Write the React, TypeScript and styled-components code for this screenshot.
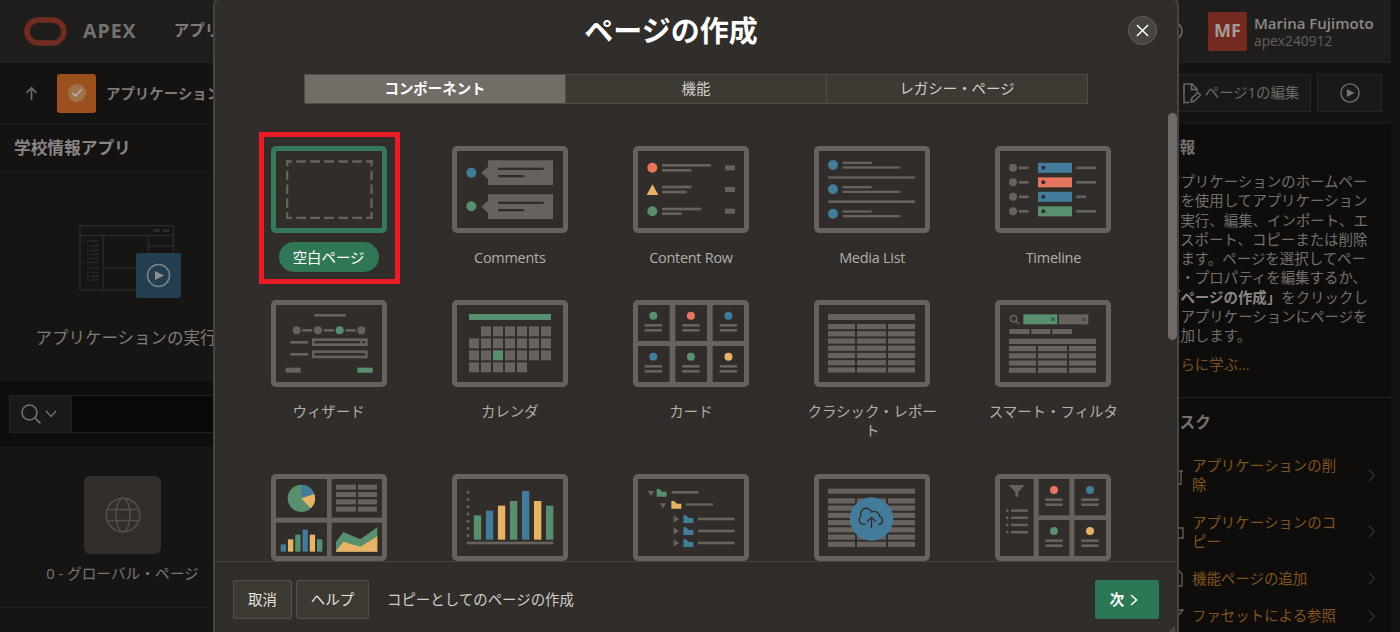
import React from "react";
import styled, { createGlobalStyle } from "styled-components";

const GREY = "#67625e";
const GREEN = "#578f6f";
const BLUE = "#437c9a";
const YELLOW = "#e9b366";
const RED = "#e5755f";
const PANEL = "#312d2a";

const Global = createGlobalStyle`
  * { box-sizing: border-box; }
  html, body { margin: 0; padding: 0; background: #151312; overflow: hidden; }
  body { font-family: "Open Sans", "Noto Sans CJK JP", sans-serif; font-size: 14.45px; line-height: 19.3px; }
  svg { display: block; flex: none; }
  button { font: inherit; cursor: pointer; }
`;

/* ---------- page behind the dialog ---------- */

const Viewport = styled.div`
  position: relative;
  width: 1400px;
  height: 632px;
  overflow: hidden;
  background: #151312;
`;

const Shell = styled.div`
  width: 1391px;
  height: 632px;
  display: flex;
  flex-direction: column;
`;

const TopBar = styled.header`
  height: 63px;
  flex: none;
  display: flex;
  align-items: center;
  background: #201e1c;
  border-bottom: 1px solid #252220;
  padding: 0 17px 0 24px;
`;

const Brand = styled.span`
  margin-left: 16px;
  font-size: 19.5px;
  font-weight: 700;
  letter-spacing: 1px;
  color: #74716f;
`;

const NavItem = styled.span`
  margin-left: 37px;
  font-size: 15.5px;
  font-weight: 700;
  color: #7f7c7a;
  white-space: nowrap;
`;

const Account = styled.div`
  margin-left: auto;
  display: flex;
  align-items: center;
`;

const Avatar = styled.div`
  width: 39px;
  height: 39px;
  margin: 0 7px 0 25px;
  border-radius: 2px;
  background: #742a20;
  color: #a39b98;
  font-size: 18px;
  font-weight: 700;
  display: flex;
  align-items: center;
  justify-content: center;
`;

const AccountText = styled.div`
  width: 120px;
  padding-top: 1px;
  line-height: 18px;
  white-space: nowrap;
`;

const UserName = styled.div`
  font-size: 15px;
  font-weight: 600;
  color: #8c8987;
`;

const Workspace = styled.div`
  font-size: 13.8px;
  color: #625f5d;
`;

const ToolBar = styled.div`
  height: 61px;
  flex: none;
  display: flex;
  align-items: center;
  padding: 0 9px 0 24px;
  background: #151312;
  border-bottom: 1px solid #1e1c1a;
`;

const AppIcon = styled.div`
  width: 39px;
  height: 39px;
  margin: 0 10px 0 18px;
  border-radius: 3px;
  background: #9b501d;
  display: flex;
  align-items: center;
  justify-content: center;
`;

const Crumb = styled.span`
  padding-top: 1px;
  font-weight: 600;
  color: #7c7977;
`;

const ToolButton = styled.button<{ $w: number }>`
  width: ${(p) => p.$w}px;
  height: 38px;
  margin-left: 6px;
  padding: 0;
  display: flex;
  align-items: center;
  justify-content: center;
  gap: 4px;
  background: #1b1917;
  border: 1px solid #282522;
  color: #6b6866;
`;

const ToolRight = styled.div`
  margin-left: auto;
  display: flex;
`;

const Columns = styled.div`
  flex: 1;
  min-height: 0;
  display: flex;
`;

const Main = styled.main`
  flex: 1;
  background: #171513;
`;

const PageTitle = styled.h1`
  margin: 0;
  height: 48px;
  padding-left: 14px;
  display: flex;
  align-items: center;
  font-size: 16.7px;
  font-weight: 700;
  color: #898684;
  background: #151312;
  border-bottom: 1px solid #1f1d1b;
`;

const RunCard = styled.div`
  width: 252px;
  height: 208px;
  padding-top: 53px;
  display: flex;
  flex-direction: column;
  align-items: center;
  font-size: 16.5px;
  color: #7f7c7a;
  white-space: nowrap;
  gap: 30px;
`;

const SearchRow = styled.div`
  height: 68px;
  padding: 14px 9px 14px 9px;
  display: flex;
  background: #0f0e0c;
  border-bottom: 1px solid #1b1917;
  border-top: 1px solid #1b1917;
`;

const SearchScope = styled.div`
  width: 63px;
  display: flex;
  align-items: center;
  padding-left: 11px;
  gap: 3px;
  background: #1b1917;
  border: 1px solid #242120;
`;

const SearchInput = styled.div`
  flex: 1;
  background: #0a0908;
  border: solid #242120;
  border-width: 1px 0;
`;

const PageCard = styled.div`
  width: 245px;
  height: 159px;
  padding-top: 28px;
  display: flex;
  flex-direction: column;
  align-items: center;
  gap: 10px;
  font-size: 14.7px;
  color: #787573;
`;

const PageBadge = styled.div`
  width: 77px;
  height: 78px;
  border-radius: 6px;
  background: #312e2b;
  display: flex;
  align-items: center;
  justify-content: center;
`;

const Divider = styled.div`
  height: 1px;
  background: #1f1d1b;
`;

const Aside = styled.aside`
  width: 243px;
  background: #0f0d0c;
`;

const InfoPanel = styled.section`
  height: 274px;
  padding: 14px 0 0 16px;
  border-bottom: 1px solid #262321;
`;

const AsideTitle = styled.h2`
  margin: 0;
  font-size: 15.6px;
  line-height: 18px;
  font-weight: 700;
  color: #75726f;
`;

const InfoText = styled.p`
  margin: 16px 0 0 2px;
  color: #72706e;
  white-space: nowrap;
  b { color: #8a8785; }
`;

const LearnMore = styled.a`
  display: block;
  margin: 9px 0 0 2px;
  color: #79501f;
`;

const TaskPanel = styled.section`
  padding: 15px 0 0 16px;
`;

const TaskList = styled.ul`
  list-style: none;
  margin: 16px 0 0;
  padding: 0;
`;

const Task = styled.li`
  display: flex;
  align-items: center;
  padding: 9px 15px 9px 4px;
  color: #80541f;
`;

const TaskLabel = styled.span`
  width: 160px;
  margin-left: 8px;
  flex: 1;
  padding-right: 27px;
`;

/* ---------- dialog ---------- */

const Dialog = styled.div`
  position: absolute;
  left: 213px;
  top: -2px;
  width: 966px;
  height: 642px;
  border: 2px solid #47433f;
  border-radius: 7px;
  background: ${PANEL};
  display: flex;
  flex-direction: column;
  overflow: hidden;
`;

const DialogHead = styled.div`
  height: 74px;
  flex: none;
  display: flex;
  align-items: flex-start;
  padding: 16px 20px 0 0;
`;

const DialogTitle = styled.h2`
  flex: 1;
  margin: 0;
  padding-right: 1px;
  text-align: center;
  font-size: 29px;
  line-height: 30px;
  font-weight: 700;
  color: #fff;
`;

const Close = styled.button`
  width: 29px;
  height: 29px;
  padding: 0;
  border-radius: 50%;
  border: 1px solid #66615c;
  background: #47433f;
  color: #fff;
  display: flex;
  align-items: center;
  justify-content: center;
`;

const Tabs = styled.div`
  margin: 0 0 0 89px;
  width: 784px;
  height: 30px;
  flex: none;
  display: flex;
  border: 1px solid #514d46;
`;

const Tab = styled.div<{ $on?: boolean }>`
  flex: 1;
  display: flex;
  align-items: center;
  justify-content: center;
  background: ${(p) => (p.$on ? "#736d68" : "#3d3933")};
  color: ${(p) => (p.$on ? "#fff" : "#d3d0cd")};
  font-weight: ${(p) => (p.$on ? 700 : 400)};
  & + & { border-left: 1px solid #514d46; }
`;

const Scroll = styled.div`
  flex: none;
  height: 457px;
  padding-top: 9px;
  display: flex;
  overflow: hidden;
`;

const Grid = styled.div`
  flex: 1;
  display: grid;
  grid-template-columns: repeat(5, 181.2px);
  align-content: start;
  row-gap: 27.9px;
  padding: 33px 0 0 23px;
`;

const Track = styled.div`
  width: 9px;
`;

const Thumb = styled.div`
  height: 227px;
  border-radius: 5px;
  background: #6f6a66;
`;

const Tile = styled.div`
  display: flex;
  flex-direction: column;
  align-items: center;
`;

const TileLabel = styled.span<{ $on?: boolean }>`
  margin-top: 9px;
  padding: 5.5px 14px;
  max-width: 162px;
  border-radius: 15px;
  text-align: center;
  background: ${(p) => (p.$on ? "#307855" : "transparent")};
  color: ${(p) => (p.$on ? "#fff" : "#b2aeab")};
`;

const LatinName = styled.span`
  font-weight: 500;
  letter-spacing: -0.25px;
`;

const Foot = styled.div`
  flex: 1;
  display: flex;
  align-items: flex-start;
  padding: 18px 18px 0 18px;
  border-top: 1px solid #45413d;
`;

const FootButton = styled.button<{ $w: number }>`
  width: ${(p) => p.$w}px;
  height: 39px;
  margin-right: 4px;
  padding: 0;
  border: 1px solid #55514a;
  border-radius: 2px;
  background: #3d3933;
  color: #e4e1de;
`;

const FootLink = styled.a`
  margin-left: 14px;
  line-height: 39px;
  color: #d0cdca;
`;

const Next = styled.button`
  width: 64px;
  height: 39px;
  margin-left: auto;
  border: 0;
  border-radius: 2px;
  padding: 0 6px 0 0;
  background: #2c7854;
  color: #fff;
  font-weight: 700;
  display: flex;
  align-items: center;
  justify-content: center;
  gap: 6px;
`;

const Grip = styled.svg`
  position: absolute;
  right: 2px;
  top: 627px;
`;

const Highlight = styled.div`
  position: absolute;
  left: 259px;
  top: 132px;
  width: 141px;
  height: 152px;
  border: 5px solid #ed1c24;
`;

/* ---------- artwork ---------- */

type Box = [number, number, number, number];

/* Boxes are given as left, top, right, bottom. */
const Boxes = ({ list, fill = GREY }: { list: Box[]; fill?: string }) => (
  <g fill={fill}>
    {list.map(([a, b, c, d], i) => (
      <rect key={i} x={a} y={b} width={c - a} height={d - b} />
    ))}
  </g>
);

const Dot = ({ x, y, r = 15, c }: { x: number; y: number; r?: number; c: string }) => (
  <circle cx={x} cy={y} r={r} fill={c} />
);

const Art = ({ on, children }: { on?: boolean; children: React.ReactNode }) => (
  <svg width="116" height="87" viewBox="0 0 348 261">
    {children}
    <rect x="7.5" y="7.5" width="333" height="246" rx="7" fill="none" stroke={on ? "#357a58" : GREY} strokeWidth="15" />
  </svg>
);

const columns: [number, number][] = [[42, 123], [129, 216], [222, 303]];
const tableRows = (top: number, n: number): Box[] =>
  Array.from({ length: n }).flatMap((_, i) =>
    columns.map(([a, b]) => [a, top + i * 21.7, b, top + i * 21.7 + 15.5] as Box)
  );

const MiniCard = ({ x, y, c }: { x: number; y: number; c: string }) => (
  <g>
    <Dot x={x} y={y} r={12} c={c} />
    <Boxes list={[[x - 26, y + 25, x + 26, y + 33], [x - 26, y + 40, x + 26, y + 48]]} />
  </g>
);

const Folder = ({ x, y, c }: { x: number; y: number; c: string }) => (
  <path d={`M${x} ${y}h8l9 8h13v15h-30z`} fill={c} />
);

const BlankArt = (
  <Art on>
    <g stroke={GREY} strokeWidth="7">
      <path d="M45 46.5H305M45 215.5H305" strokeDasharray="29 13" strokeDashoffset="11" />
      <path d="M48.500 43V219M301.500 43V219" strokeDasharray="28 13.600" strokeDashoffset="10.500" />
    </g>
  </Art>
);

const CommentsArt = (
  <Art>
    <Dot x={58} y={80} c={BLUE} />
    <Dot x={58} y={181} c={GREEN} />
    <path d="M108 43H303V117H108V99L88 80L108 62ZM108 145H303V219H108V201L88 182L108 164Z" fill={GREY} />
    <Boxes fill={PANEL} list={[[138, 65, 275, 72], [138, 87, 217, 94], [138, 167, 275, 174], [138, 189, 217, 196]]} />
  </Art>
);

const ContentRowArt = (
  <Art>
    <Dot x={58} y={65} c={RED} />
    <path d="M58.500 115L76 147H41Z" fill={YELLOW} />
    <Dot x={58} y={196} c={GREEN} />
    <Boxes
      list={[
        [87, 54, 234, 62], [87, 69, 175, 77], [276, 58, 306, 73],
        [87, 119, 175, 127], [87, 134, 161, 142], [276, 123, 306, 138],
        [87, 185, 204, 193], [87, 199, 146, 207], [276, 188, 306, 203],
      ]}
    />
  </Art>
);

const MediaListArt = (
  <Art>
    {[57, 130, 203].map((y) => (
      <g key={y}>
        <Dot x={57} y={y} c={BLUE} />
        <Boxes list={[[86, y - 10, 173, y - 3], [86, y + 4, 259, y + 11]]} />
      </g>
    ))}
    <Boxes list={[[43, 91, 303, 98], [43, 163, 303, 171]]} />
  </Art>
);

const TimelineArt = (
  <Art>
    {[BLUE, RED, BLUE, GREEN].map((c, i) => {
      const y = 65.5 + i * 43.5;
      return (
        <g key={i}>
          <Dot x={54} y={y} r={12} c={GREY} />
          <Boxes list={[[72, y - 4, 101, y + 4], [244, y - 4, i === 2 ? 273 : 303, y + 4]]} />
          <Boxes fill={c} list={[[129, y - 15, 231, y + 15]]} />
          <Dot x={145} y={y} r={6} c={PANEL} />
        </g>
      );
    })}
  </Art>
);

const WizardArt = (
  <Art>
    <Boxes
      list={[
        [130, 42, 225, 50], [94, 87, 124, 95], [159, 87, 189, 95], [224, 87, 254, 95],
        [58, 123, 111, 131], [58, 159, 111, 167], [44, 203, 89, 218],
        [123, 115, 290, 138], [123, 151, 290, 175],
      ]}
    />
    <Boxes fill={PANEL} list={[[130, 123, 268, 130], [274, 123, 282, 130], [130, 159, 283, 167]]} />
    <Boxes fill={GREEN} list={[[259, 203, 305, 218]]} />
    {[77, 141, 206, 271].map((x, i) => (
      <Dot key={x} x={x} y={91} r={12} c={i === 2 ? GREEN : GREY} />
    ))}
  </Art>
);

const CalendarArt = (
  <Art>
    <Boxes fill={GREEN} list={[[51, 42, 297, 60]]} />
    {Array.from({ length: 28 }).map((_, i) => {
      if (i === 0 || i > 25) return null;
      const x = 51 + (i % 7) * 36;
      const y = 79 + Math.floor(i / 7) * 36;
      return <Boxes key={i} fill={i === 16 ? GREEN : GREY} list={[[x, y, x + 30, y + 30]]} />;
    })}
  </Art>
);

const CardsArt = (
  <Art>
    <Boxes list={[[110, 10, 127, 250], [222, 10, 239, 250], [10, 123, 340, 138]]} />
    {[GREEN, RED, BLUE, BLUE, GREEN, YELLOW].map((c, i) => (
      <MiniCard key={i} x={61 + (i % 3) * 112.700} y={i < 3 ? 47 : 170} c={c} />
    ))}
  </Art>
);

const ReportArt = (
  <Art>
    <Boxes list={[[42, 42, 303, 60], ...tableRows(72, 7)]} />
  </Art>
);

const SmartFilterArt = (
  <Art>
    <g fill="none" stroke={GREY} strokeWidth="4.500">
      <circle cx="56" cy="56" r="9.500" />
      <path d="M63 63L72 72" />
    </g>
    <Boxes fill={GREEN} list={[[85, 43, 187, 73]]} />
    <Boxes
      list={[
        [192, 43, 280, 73], [43, 87, 103, 102], [109, 87, 166, 102], [172, 87, 231, 102],
        [42, 116, 303, 132], ...tableRows(138, 4),
      ]}
    />
    <path d="M169 53l10 10m0-10l-10 10M261 53l10 10m0-10l-10 10" stroke={PANEL} strokeWidth="3" />
  </Art>
);

const DashboardArt = (
  <Art>
    <Boxes
      list={[
        [168, 10, 182, 250], [10, 131, 340, 146],
        ...[32, 54, 76, 98].flatMap((y) => [[195, y, 255, y + 15], [261, y, 318, y + 15]] as Box[]),
      ]}
    />
    <circle cx="91" cy="73" r="41" fill={GREEN} />
    <path d="M91 73V32A41 41 0 0 1 130 60Z" fill={BLUE} />
    <path d="M91 73L130 60A41 41 0 0 1 119 103Z" fill={YELLOW} />
    {[211, 196, 182, 167, 182, 196].map((y, i) => (
      <Boxes key={i} fill={[BLUE, YELLOW, GREEN][i % 3]} list={[[29 + i * 21.8, y, 45 + i * 21.8, 233]]} />
    ))}
    <path d="M195 203L217 174L268 196L319 160V233H195Z" fill={GREEN} />
    <path d="M195 231L217 203L268 218L319 187V233H195Z" fill={YELLOW} />
  </Art>
);

const ChartArt = (
  <Art>
    <Boxes list={[[44, 203, 304, 211], ...Array.from({ length: 7 }).map((_, i) => [44, 51 + i * 21.7, 52, 59 + i * 21.7] as Box)]} />
    {[124, 110, 95, 81, 51, 81, 95].map((y, i) => (
      <Boxes key={i} fill={[GREEN, BLUE, YELLOW][i % 3]} list={[[65.500 + i * 36.1, y, 87.500 + i * 36.1, 197]]} />
    ))}
  </Art>
);

const TreeArt = (
  <Art>
    <path d="M44 51H64L54 66ZM80 88H100L90 103Z" fill={GREY} />
    <Folder x={71} y={45} c={GREEN} />
    <Folder x={115} y={81} c={YELLOW} />
    <Boxes list={[[116, 51, 196, 59], [158, 88, 240, 95]]} />
    {[124, 160, 196].map((y) => (
      <g key={y}>
        <path d={`M122 ${y}L138 ${y + 11}L122 ${y + 22}Z`} fill={GREY} />
        <Folder x={151} y={y} c={BLUE} />
        <Boxes list={[[195, y + 7, 305, y + 15]]} />
      </g>
    ))}
  </Art>
);

const DataLoadArt = (
  <Art>
    <Boxes list={[[42, 44, 303, 59], ...tableRows(73, 7)]} />
    <circle cx="172.500" cy="135" r="65" fill={BLUE} />
    <g fill="none" stroke={PANEL} strokeWidth="4">
      <path d="M155 151H148A14 14 0 0 1 141 126A17 17 0 0 1 173 114A17 17 0 0 1 197 127A13 13 0 0 1 198 151H192" />
      <path d="M172.500 163V131M159 143L172.500 130L186 143" />
    </g>
  </Art>
);

const FacetedArt = (
  <Art>
    <Boxes
      list={[
        [116, 10, 131, 250], [223, 10, 238, 250], [120, 124, 340, 138],
        ...[106, 127.5, 149, 171].flatMap((y) => [[33, y, 40, y + 7.5], [48, y, 99, y + 7.5]] as Box[]),
      ]}
    />
    <path d="M41 33H89L70 54V68H61V54Z" fill={GREY} />
    <MiniCard x={177} y={48} c={RED} />
    <MiniCard x={285} y={48} c={BLUE} />
    <MiniCard x={177} y={171} c={GREEN} />
    <MiniCard x={285} y={171} c={YELLOW} />
  </Art>
);

const tiles: { name?: React.ReactNode; art: React.ReactNode; on?: boolean }[] = [
  { name: "空白ページ", art: BlankArt, on: true },
  { name: <LatinName>Comments</LatinName>, art: CommentsArt },
  { name: <LatinName>Content Row</LatinName>, art: ContentRowArt },
  { name: <LatinName>Media List</LatinName>, art: MediaListArt },
  { name: <LatinName>Timeline</LatinName>, art: TimelineArt },
  { name: "ウィザード", art: WizardArt },
  { name: "カレンダ", art: CalendarArt },
  { name: "カード", art: CardsArt },
  { name: "クラシック・レポート", art: ReportArt },
  { name: "スマート・フィルタ", art: SmartFilterArt },
  { art: DashboardArt },
  { art: ChartArt },
  { art: TreeArt },
  { art: DataLoadArt },
  { art: FacetedArt },
];

const PlayIcon = ({ size, color }: { size: number; color: string }) => (
  <svg width={size} height={size} viewBox="0 0 22 22">
    <circle cx="11" cy="11" r="10" fill="none" stroke={color} strokeWidth="1.500" />
    <path d="M7.500 6.500L16 11L7.500 15.500Z" fill={color} />
  </svg>
);

const RunPreview = () => (
  <svg width="95" height="73" viewBox="0 0 95 73" overflow="visible">
    <g fill="none" stroke="#2b2926" strokeWidth="1.500">
      <path d="M1 .8H94.500V65H1ZM1 10.500H94.500M24.500 10.500V65M69.500 10.500V43H24.500M69.500 21H94" />
      <path d="M74 5.500H90" strokeWidth="3" strokeDasharray="7 2" />
      <path d="M4 16H19M8 21H20M8 25.500H20M8 29.500H20M8 33.500H20M4 37.500H19M8 43H20M8 47.500H20M8 51.500H20M8 55H20" strokeDasharray="2 2 20 0" />
    </g>
    <rect x="57" y="28" width="45" height="45" rx="2.500" fill="#233e4e" />
    <circle cx="79.500" cy="50.500" r="11" fill="none" stroke="#7d8386" strokeWidth="1.500" />
    <path d="M76 46L85 50.500L76 55Z" fill="#8a8e90" />
  </svg>
);

const taskIcons = [
  "M1 5H15M3 5V18H13V5M6 5V2H10V5",
  "M1 2H10V6M5 6H15V16H5Z",
  "M3 1H10L14 5V17H3Z",
  "M1 3H15L9 10V16L7 14V10Z",
];
const tasks = ["アプリケーションの削除", "アプリケーションのコピー", "機能ページの追加", "ファセットによる参照"];

export default function App() {
  return (
    <Viewport>
      <Global />
      <Shell>
        <TopBar>
          <svg width="43" height="29" viewBox="0 0 43 29">
            <rect x="3" y="3" width="37" height="23" rx="11.500" fill="none" stroke="#702c21" strokeWidth="5.500" />
          </svg>
          <Brand>APEX</Brand>
          <NavItem>アプリケーション・ビルダー</NavItem>
          <Account>
            <svg width="20" height="20" viewBox="0 0 20 20" fill="none" stroke="#6f6c6a" strokeWidth="1.500">
              <circle cx="10" cy="10" r="9" />
            </svg>
            <Avatar>MF</Avatar>
            <AccountText>
              <UserName>Marina Fujimoto</UserName>
              <Workspace>apex240912</Workspace>
            </AccountText>
          </Account>
        </TopBar>
        <ToolBar>
          <svg width="15" height="15" viewBox="0 0 15 15" fill="none" stroke="#6a6765" strokeWidth="1.800">
            <path d="M7.500 14V2M2.500 6.800L7.500 1.800L12.500 6.800" />
          </svg>
          <AppIcon>
            <svg width="18" height="18" viewBox="0 0 18 18">
              <circle cx="9" cy="9" r="9" fill="#a0714a" />
              <path d="M4.500 9L7.500 12L13.500 5.500" fill="none" stroke="#b5aca5" strokeWidth="1.800" />
            </svg>
          </AppIcon>
          <Crumb>アプリケーション102</Crumb>
          <ToolRight>
            <ToolButton $w={140}>
              <svg width="18" height="21" viewBox="0 0 18 21" fill="none" stroke="#6b6866" strokeWidth="1.500">
                <path d="M6 19.500H1V1H9L14 6V9M8.500 1V6.500H14M8 19L9 15L15 9.500L17.500 12L11.500 18Z" />
              </svg>
              ページ1の編集
            </ToolButton>
            <ToolButton $w={65}>
              <PlayIcon size={20} color="#74716f" />
            </ToolButton>
          </ToolRight>
        </ToolBar>
        <Columns>
          <Main>
            <PageTitle>学校情報アプリ</PageTitle>
            <RunCard>
              <RunPreview />
              アプリケーションの実行
            </RunCard>
            <SearchRow>
              <SearchScope>
                <svg width="21" height="20" viewBox="0 0 21 20" fill="none" stroke="#74716f" strokeWidth="1.600">
                  <circle cx="8.500" cy="8.500" r="7.500" />
                  <path d="M13.800 13.800L19.500 19.300" />
                </svg>
                <svg width="12" height="8" viewBox="0 0 12 8" fill="none" stroke="#74716f" strokeWidth="1.500">
                  <path d="M1 1L6 6.500L11 1" />
                </svg>
              </SearchScope>
              <SearchInput />
            </SearchRow>
            <PageCard>
              <PageBadge>
                <svg width="36" height="36" viewBox="0 0 36 36" fill="none" stroke="#524f4c" strokeWidth="1.500">
                  <circle cx="18" cy="18" r="16.800" />
                  <ellipse cx="18" cy="18" rx="7" ry="16.800" />
                  <path d="M2.500 12.500H33.500M2.500 23.500H33.500" />
                </svg>
              </PageBadge>
              0 - グローバル・ページ
            </PageCard>
            <Divider />
          </Main>
          <Aside>
            <InfoPanel>
              <AsideTitle>情報</AsideTitle>
              <InfoText>
                アプリケーションのホームペー<br />
                ジを使用してアプリケーション<br />
                を実行、編集、インポート、エ<br />
                クスポート、コピーまたは削除<br />
                します。ページを選択してペー<br />
                ジ・プロパティを編集するか、<br />
                <b>「ページの作成」</b>をクリックし<br />
                てアプリケーションにページを<br />
                追加します。
              </InfoText>
              <LearnMore>さらに学ぶ...</LearnMore>
            </InfoPanel>
            <TaskPanel>
              <AsideTitle>タスク</AsideTitle>
              <TaskList>
                {tasks.map((t, i) => (
                  <Task key={t}>
                    <svg width="16" height="19" viewBox="0 0 16 19" fill="none" stroke="#666361" strokeWidth="1.300">
                      <path d={taskIcons[i]} />
                    </svg>
                    <TaskLabel>{t}</TaskLabel>
                    <svg width="8" height="13" viewBox="0 0 8 13" fill="none" stroke="#34312f" strokeWidth="1.300">
                      <path d="M1 1L6.500 6.500L1 12" />
                    </svg>
                  </Task>
                ))}
              </TaskList>
            </TaskPanel>
          </Aside>
        </Columns>
      </Shell>

      <Dialog role="dialog">
        <DialogHead>
          <DialogTitle>ページの作成</DialogTitle>
          <Close aria-label="閉じる">
            <svg width="13" height="13" viewBox="0 0 14 14" stroke="#fff" strokeWidth="1.600">
              <path d="M1 1L13 13M13 1L1 13" />
            </svg>
          </Close>
        </DialogHead>
        <Tabs>
          <Tab $on>コンポーネント</Tab>
          <Tab>機能</Tab>
          <Tab>レガシー・ページ</Tab>
        </Tabs>
        <Scroll>
          <Grid>
            {tiles.map((t, i) => (
              <Tile key={i}>
                {t.art}
                {t.name && <TileLabel $on={t.on}>{t.name}</TileLabel>}
              </Tile>
            ))}
          </Grid>
          <Track>
            <Thumb />
          </Track>
        </Scroll>
        <Foot>
          <FootButton $w={59}>取消</FootButton>
          <FootButton $w={73}>ヘルプ</FootButton>
          <FootLink>コピーとしてのページの作成</FootLink>
          <Next>
            次
            <svg width="8" height="12" viewBox="0 0 8 12" fill="none" stroke="#fff" strokeWidth="1.500">
              <path d="M1 1L6.500 6L1 11" />
            </svg>
          </Next>
        </Foot>
        <Grip width="6" height="6" viewBox="0 0 6 6" stroke="#77726e">
          <path d="M0 6L6 0M3 6L6 3" />
        </Grip>
      </Dialog>
      <Highlight />
    </Viewport>
  );
}
